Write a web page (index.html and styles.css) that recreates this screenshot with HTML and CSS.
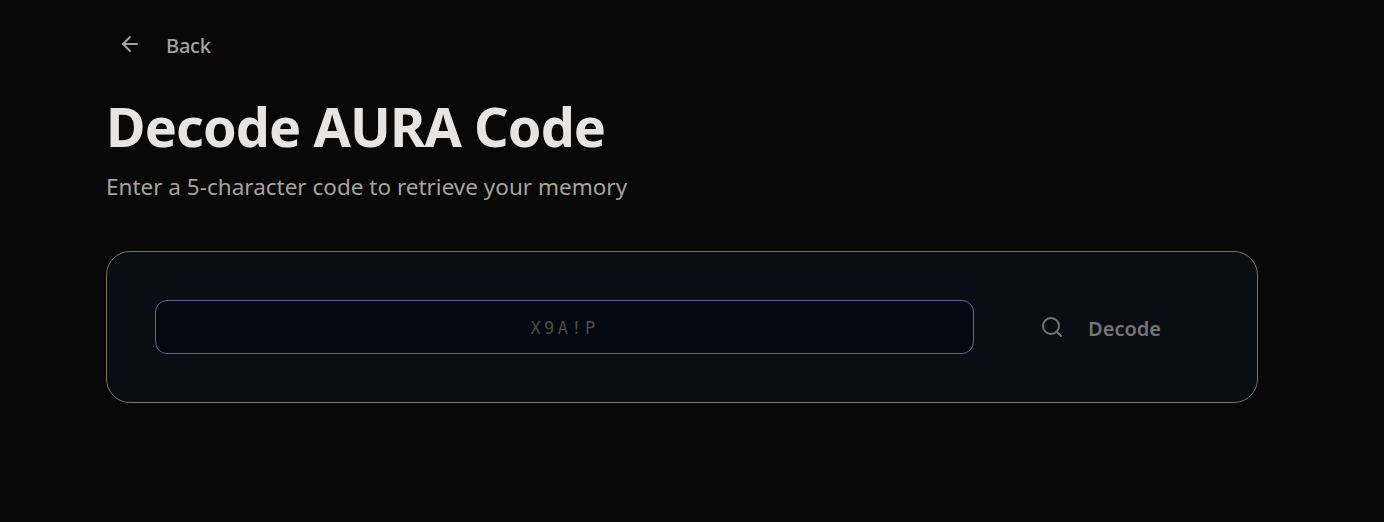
FILE: index.html
```html
<!DOCTYPE html>
<html lang="en">
<head>
<meta charset="utf-8">
<title>Decode AURA Code</title>
<link rel="stylesheet" href="styles.css">
</head>
<body>
<main class="page">
  <a class="back" href="#">
    <svg class="icon" viewBox="0 0 24 24" width="24" height="24" fill="none" stroke="currentColor" stroke-width="1.9" stroke-linecap="round" stroke-linejoin="round"><path d="M19 12H5"/><path d="M12 19l-7-7 7-7"/></svg>
    <span class="label">Back</span>
  </a>
  <h1 class="title">Decode AURA Code</h1>
  <p class="subtitle">Enter a 5-character code to retrieve your memory</p>
  <section class="card">
    <input class="code" type="text" placeholder="X9A!P" maxlength="5">
    <button class="decode" type="button">
      <svg class="icon" viewBox="0 0 24 24" width="24" height="24" fill="none" stroke="currentColor" stroke-width="2" stroke-linecap="round" stroke-linejoin="round"><circle cx="11" cy="11" r="8"/><path d="M21 21l-4.3-4.3"/></svg>
      <span class="label">Decode</span>
    </button>
  </section>
</main>
</body>
</html>
```
FILE: styles.css
```css
* { box-sizing: border-box; }
html, body { margin: 0; height: 100%; }
body {
  background: #080808;
  font-family: "Noto Sans", "Open Sans", sans-serif;
  overflow: hidden;
}
.page {
  width: 1152px;
  margin-left: 106px;
  padding-top: 20px;
}
.back {
  display: inline-flex;
  align-items: center;
  gap: 24px;
  height: 48px;
  padding: 0 12px;
  color: #a8a29e;
  font-size: 20px;
  font-weight: 500;
  letter-spacing: -0.2px;
  text-decoration: none;
}
.label { padding-top: 2px; }
.title {
  margin: 22px 0 0;
  color: #e7e5e4;
  font-size: 54px;
  line-height: 72px;
  font-weight: 700;
  letter-spacing: -0.9px;
}
.subtitle {
  margin: 9px 0 0;
  color: #a8a29e;
  font-size: 22.5px;
  line-height: 32px;
}
.card {
  display: flex;
  align-items: center;
  gap: 18px;
  margin-top: 48px;
  padding: 48px;
  height: 152px;
  background: #0a0d14;
  border: 1px solid #7a7268;
  border-radius: 24px;
}
.code {
  flex: 1;
  min-width: 0;
  height: 54px;
  padding-top: 3px;
  background: #050711;
  border: 1px solid #546a99;
  border-radius: 12px;
  color: #e7e5e4;
  text-align: center;
  font-family: "DejaVu Sans Mono", monospace;
  font-size: 17px;
  letter-spacing: 3.4px;
  outline: none;
}
.code::placeholder { color: #4f4c49; opacity: 1; }
.decode {
  display: flex;
  align-items: center;
  gap: 24px;
  padding: 0 48px;
  height: 54px;
  background: none;
  border: 0;
  color: #757575;
  font-family: inherit;
  font-size: 20px;
  font-weight: 600;
}
```
